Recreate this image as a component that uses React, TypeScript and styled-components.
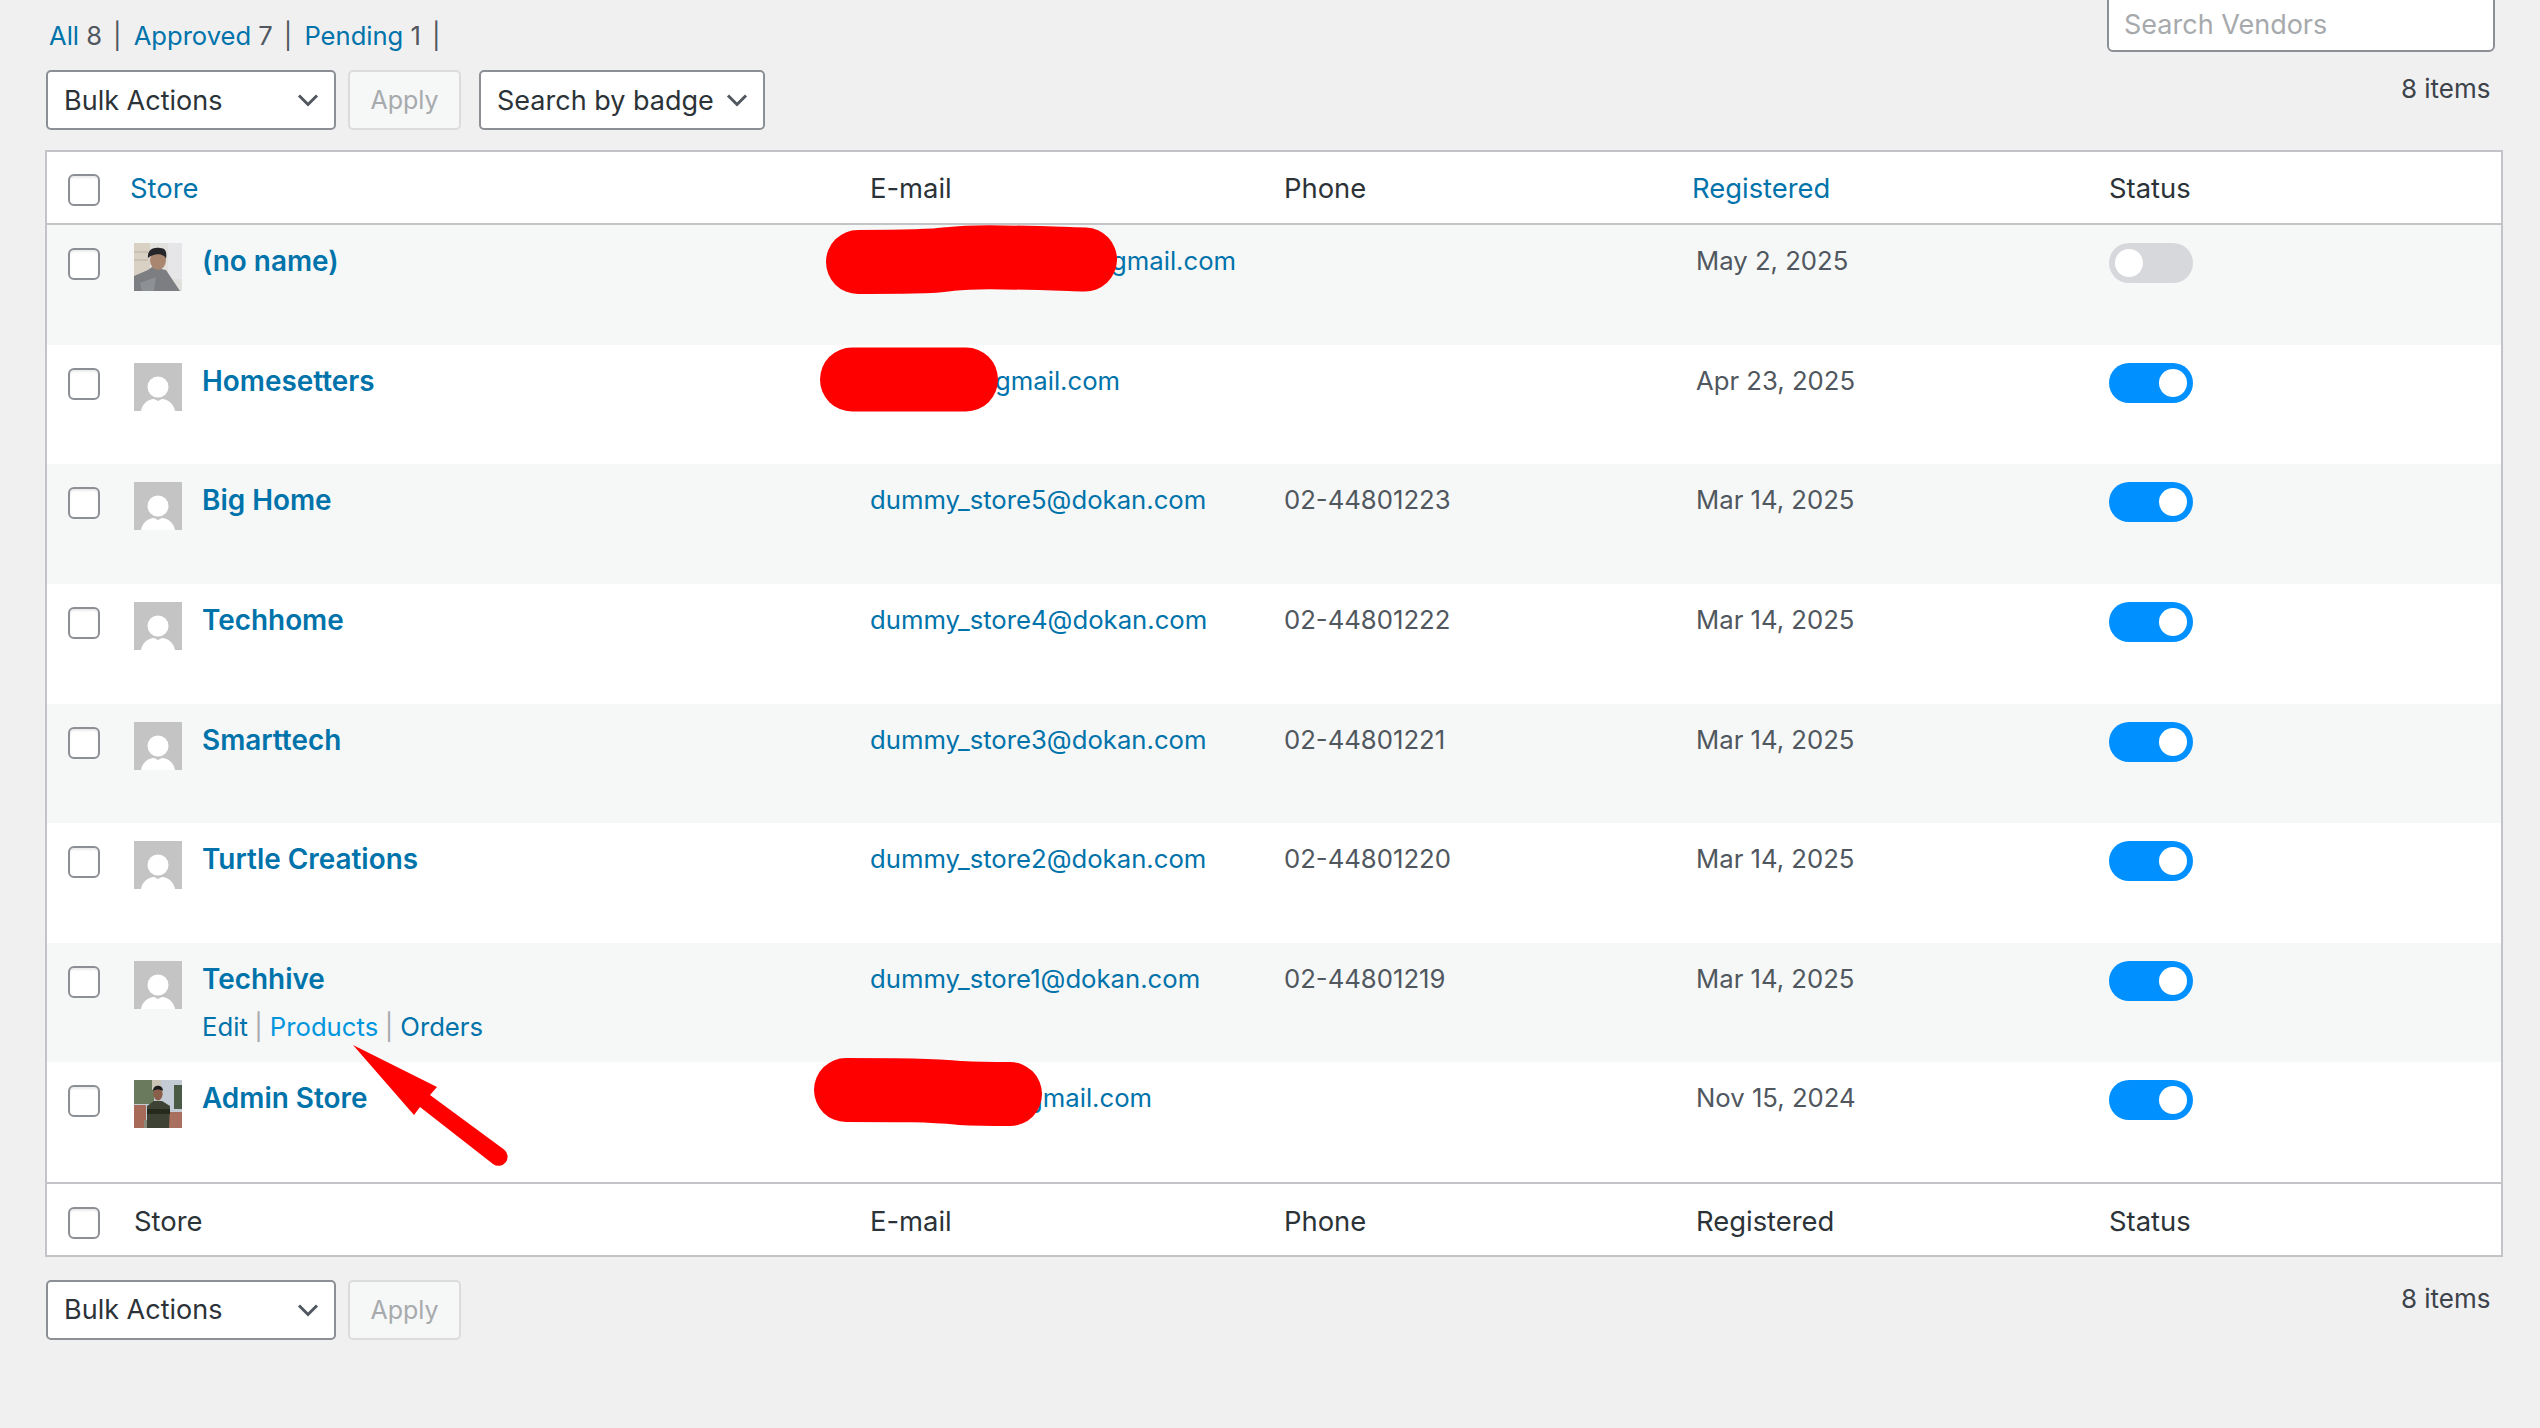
import React from "react";
import styled, { createGlobalStyle } from "styled-components";

const Global = createGlobalStyle`
  html, body { margin: 0; padding: 0; background: #f0f0f1; overflow: hidden; }
  body { font-family: Inter, "Noto Sans", "Liberation Sans", sans-serif; color: #3c434a; }
`;

const Page = styled.div`
  position: relative;
  width: 2540px;
  height: 1428px;
  overflow: hidden;
  box-sizing: border-box;
  padding: 0 37px 0 45px;
`;

const TopBar = styled.div`
  display: flex;
  justify-content: space-between;
  align-items: flex-start;
  height: 70px;
`;

const Filters = styled.ul`
  list-style: none;
  display: flex;
  margin: 20.5px 0 0 4px;
  padding: 0;
  font-size: 25.6px;
  line-height: 30px;
  color: #50575e;
`;

const Filter = styled.li`
  white-space: pre;
`;

const Sep = styled.span`
  margin: 0 12px 0 11px;
  color: #50575e;
`;

const Link = styled.a<{ $bright?: boolean }>`
  color: ${(p) => (p.$bright ? "#0096dd" : "#0073aa")};
  text-decoration: none;
`;

const SearchInput = styled.div`
  box-sizing: border-box;
  width: 388px;
  height: 60px;
  margin: -8px 8px 0 0;
  padding: 15px 15px 0;
  background: #fff;
  border: 2px solid #8c8f94;
  border-radius: 6px;
  font-size: 27px;
  line-height: 32px;
  color: #a7aaad;
`;

const Tablenav = styled.div<{ $bottom?: boolean }>`
  display: flex;
  align-items: flex-start;
  height: 60px;
  padding-left: 1px;
  margin-top: ${(p) => (p.$bottom ? 22.5 : 0)}px;
`;

const Select = styled.div<{ $w: number }>`
  box-sizing: border-box;
  width: ${(p) => p.$w}px;
  height: 60px;
  display: flex;
  align-items: center;
  justify-content: space-between;
  padding: 0 15px 0 16px;
  background: #fff;
  border: 2px solid #8c8f94;
  border-radius: 5px;
  font-size: 27px;
  color: #2c3338;
`;

const Apply = styled.div`
  box-sizing: border-box;
  width: 113px;
  height: 60px;
  margin: 0 18px 0 12px;
  display: flex;
  align-items: center;
  justify-content: center;
  background: #f6f7f7;
  border: 2px solid #dcdcde;
  border-radius: 5px;
  font-size: 25px;
  color: #a7aaad;
`;

const Count = styled.div`
  margin-left: auto;
  padding: 4px 12.5px 0 0;
  font-size: 26px;
  line-height: 30px;
  color: #3c434a;
`;

const Table = styled.div`
  box-sizing: border-box;
  width: 2458px;
  margin-top: 20px;
  background: #fff;
  border: 2px solid #c3c4c7;
`;

const columns = "87px 736px 414px 412px 413px 1fr";

const HeadRow = styled.div<{ $foot?: boolean }>`
  display: grid;
  grid-template-columns: ${columns};
  box-sizing: border-box;
  height: 73px;
  padding-top: ${(p) => (p.$foot ? 2 : 0)}px;
  align-items: center;
  border-${(p) => (p.$foot ? "top" : "bottom")}: 2px solid #c3c4c7;
  font-size: 27.4px;
  color: #2c3338;
`;

const HeadCheck = styled.div`
  padding: 4px 0 0 21px;
`;

const HeadCell = styled.div<{ $nudge?: number }>`
  margin-left: ${(p) => p.$nudge ?? 0}px;
`;

const Row = styled.div<{ $alt: boolean }>`
  display: grid;
  grid-template-columns: ${columns};
  height: 119.65px;
  background: ${(p) => (p.$alt ? "#f6f7f7" : "#fff")};
  font-size: 25.7px;
  line-height: 30px;
  color: #50575e;
`;

const RowCheck = styled.div`
  padding: 23px 0 0 21px;
`;

const Check = styled.span`
  display: block;
  box-sizing: border-box;
  width: 32px;
  height: 32px;
  background: #fff;
  border: 2px solid #8c8f94;
  border-radius: 6px;
  box-shadow: inset 0 2px 2px rgba(0, 0, 0, 0.08);
`;

const StoreCell = styled.div`
  display: grid;
  grid-template-columns: 48px 1fr;
  column-gap: 20px;
  padding-top: 18px;
`;

const AvatarBox = styled.div`
  width: 48px;
  height: 48px;
  overflow: hidden;
  svg { display: block; }
`;

const StoreName = styled.a`
  display: block;
  margin-top: 2px;
  font-size: 27.9px;
  font-weight: 600;
  line-height: 32px;
  color: #0073aa;
  text-decoration: none;
`;

const RowActions = styled.div`
  display: flex;
  margin-top: 17px;
  font-size: 25.7px;
  line-height: 30px;
`;

const ActionSep = styled.span`
  margin: 0 7px 0 6.5px;
  color: #a7aaad;
`;

const TextCell = styled.div<{ $indent?: number }>`
  padding: 21px 0 0 ${(p) => p.$indent ?? 0}px;
`;

const ToggleCell = styled.div`
  padding-top: 18px;
`;

const Track = styled.div<{ $on: boolean }>`
  box-sizing: border-box;
  width: 84px;
  height: 40px;
  padding: 6px;
  display: flex;
  justify-content: ${(p) => (p.$on ? "flex-end" : "flex-start")};
  border-radius: 20px;
  background: ${(p) => (p.$on ? "#0090ff" : "#d7d8dc")};
`;

const Knob = styled.span`
  display: block;
  width: 28px;
  height: 28px;
  border-radius: 50%;
  background: #fff;
`;

const Overlay = styled.svg`
  position: absolute;
  left: 0;
  top: 0;
  pointer-events: none;
`;

const Chevron = () => (
  <svg width="22" height="14" viewBox="0 0 22 14" fill="none">
    <path d="M2 2.5 L11 11.5 L20 2.5" stroke="#50575e" strokeWidth="3" />
  </svg>
);

const Silhouette = () => (
  <svg width="48" height="48" viewBox="0 0 48 48">
    <rect width="48" height="48" fill="#c4c4c4" />
    <circle cx="24" cy="24" r="10.5" fill="#fff" />
    <path d="M7 48 C8 41 14 36 20 36 L24 38 L28 36 C34 36 40 41 41 48 Z" fill="#fff" />
  </svg>
);

const PhotoMan = () => (
  <svg width="48" height="48" viewBox="0 0 48 48">
    <defs>
      <filter id="bm"><feGaussianBlur stdDeviation="0.7" /></filter>
    </defs>
    <rect width="48" height="48" fill="#e2e0dd" />
    <g filter="url(#bm)">
      <rect x="0" y="0" width="16" height="40" fill="#d8d1c4" />
      <rect x="0" y="8" width="14" height="2" fill="#c8c0b2" />
      <rect x="0" y="16" width="14" height="2" fill="#c8c0b2" />
      <rect x="34" y="0" width="14" height="36" fill="#e6e5e8" />
      <path d="M0 48 L0 33 L14 27 L18 24 L32 27 L38 36 L46 48 Z" fill="#7b7e82" />
      <path d="M6 40 L22 34 L20 48 L8 48 Z" fill="#8d9094" />
      <ellipse cx="24" cy="17" rx="8" ry="10" fill="#a98670" />
      <path d="M14 15 C13 6 20 4 26 5 C32 5 33 9 32 16 C30 10 20 10 14 15 Z" fill="#26282c" />
    </g>
  </svg>
);

const PhotoAdmin = () => (
  <svg width="48" height="48" viewBox="0 0 48 48">
    <defs>
      <filter id="ba"><feGaussianBlur stdDeviation="0.6" /></filter>
    </defs>
    <rect width="48" height="48" fill="#c3ccd4" />
    <g filter="url(#ba)">
      <rect x="0" y="0" width="20" height="24" fill="#6b7a5c" />
      <rect x="18" y="0" width="9" height="10" fill="#c9c4b4" />
      <rect x="40" y="5" width="8" height="24" fill="#4a5a45" />
      <rect x="0" y="25" width="12" height="23" fill="#a86a58" />
      <rect x="34" y="32" width="14" height="16" fill="#a9705e" />
      <rect x="10" y="40" width="8" height="8" fill="#8a8a7a" />
      <path d="M13 48 L13 26 L20 21 L28 21 L36 26 L35 48 Z" fill="#3d4334" />
      <ellipse cx="24" cy="14" rx="4.6" ry="6.5" fill="#8a5f48" />
      <path d="M19 11 C19 4 29 4 29 11 C26 9 22 9 19 11 Z" fill="#1a1a1c" />
      <rect x="13" y="29" width="23" height="5" fill="#262a1f" />
    </g>
  </svg>
);

type Vendor = {
  name: string;
  avatar: React.ComponentType;
  email: string;
  indent?: number;
  phone: string;
  date: string;
  on: boolean;
  actions?: boolean;
};

const vendors: Vendor[] = [
  { name: "(no name)", avatar: PhotoMan, email: "gmail.com", indent: 241, phone: "", date: "May 2, 2025", on: false },
  { name: "Homesetters", avatar: Silhouette, email: "gmail.com", indent: 125, phone: "", date: "Apr 23, 2025", on: true },
  { name: "Big Home", avatar: Silhouette, email: "dummy_store5@dokan.com", phone: "02-44801223", date: "Mar 14, 2025", on: true },
  { name: "Techhome", avatar: Silhouette, email: "dummy_store4@dokan.com", phone: "02-44801222", date: "Mar 14, 2025", on: true },
  { name: "Smarttech", avatar: Silhouette, email: "dummy_store3@dokan.com", phone: "02-44801221", date: "Mar 14, 2025", on: true },
  { name: "Turtle Creations", avatar: Silhouette, email: "dummy_store2@dokan.com", phone: "02-44801220", date: "Mar 14, 2025", on: true },
  { name: "Techhive", avatar: Silhouette, email: "dummy_store1@dokan.com", phone: "02-44801219", date: "Mar 14, 2025", on: true, actions: true },
  { name: "Admin Store", avatar: PhotoAdmin, email: "gmail.com", indent: 157, phone: "", date: "Nov 15, 2024", on: true },
];

export default function App() {
  return (
    <Page>
      <Global />
      <TopBar>
        <Filters>
          <Filter><Link>All</Link> 8<Sep>|</Sep></Filter>
          <Filter><Link>Approved</Link> 7<Sep>|</Sep></Filter>
          <Filter><Link>Pending</Link> 1<Sep>|</Sep></Filter>
        </Filters>
        <SearchInput>Search Vendors</SearchInput>
      </TopBar>
      <Tablenav>
        <Select $w={290}>Bulk Actions<Chevron /></Select>
        <Apply>Apply</Apply>
        <Select $w={286}>Search by badge<Chevron /></Select>
        <Count>8 items</Count>
      </Tablenav>
      <Table>
        <HeadRow>
          <HeadCheck><Check /></HeadCheck>
          <HeadCell $nudge={-4}><Link>Store</Link></HeadCell>
          <HeadCell>E-mail</HeadCell>
          <HeadCell>Phone</HeadCell>
          <HeadCell $nudge={-4}><Link>Registered</Link></HeadCell>
          <HeadCell>Status</HeadCell>
        </HeadRow>
        {vendors.map((v, i) => {
          const Avatar = v.avatar;
          return (
            <Row key={v.name} $alt={i % 2 === 0}>
              <RowCheck><Check /></RowCheck>
              <StoreCell>
                <AvatarBox><Avatar /></AvatarBox>
                <div>
                  <StoreName>{v.name}</StoreName>
                  {v.actions && (
                    <RowActions>
                      <Link>Edit</Link><ActionSep>|</ActionSep><Link $bright>Products</Link><ActionSep>|</ActionSep><Link>Orders</Link>
                    </RowActions>
                  )}
                </div>
              </StoreCell>
              <TextCell $indent={v.indent}><Link>{v.email}</Link></TextCell>
              <TextCell>{v.phone}</TextCell>
              <TextCell>{v.date}</TextCell>
              <ToggleCell><Track $on={v.on}><Knob /></Track></ToggleCell>
            </Row>
          );
        })}
        <HeadRow $foot>
          <HeadCheck><Check /></HeadCheck>
          <HeadCell>Store</HeadCell>
          <HeadCell>E-mail</HeadCell>
          <HeadCell>Phone</HeadCell>
          <HeadCell>Registered</HeadCell>
          <HeadCell>Status</HeadCell>
        </HeadRow>
      </Table>
      <Tablenav $bottom>
        <Select $w={290}>Bulk Actions<Chevron /></Select>
        <Apply>Apply</Apply>
        <Count>8 items</Count>
      </Tablenav>
      <Overlay width="2540" height="1428" viewBox="0 0 2540 1428" fill="none">
        <g stroke="#ff0000" strokeWidth="64" strokeLinecap="round" strokeLinejoin="round">
          <path d="M858 262 C900 262 930 262 950 259 C975 256 1000 257 1085 259.5" />
          <path d="M852 379.5 L966 379.5" />
          <path d="M846 1090 C900 1090 930 1090 960 1093 C980 1094 990 1094 1010 1094" />
        </g>
        <path
          d="M353 1045 L437 1087 L430 1095 L504 1149.5 A9 9 0 0 1 493 1164 L420 1107 L414 1115 Z"
          fill="#ff0000"
        />
      </Overlay>
    </Page>
  );
}
